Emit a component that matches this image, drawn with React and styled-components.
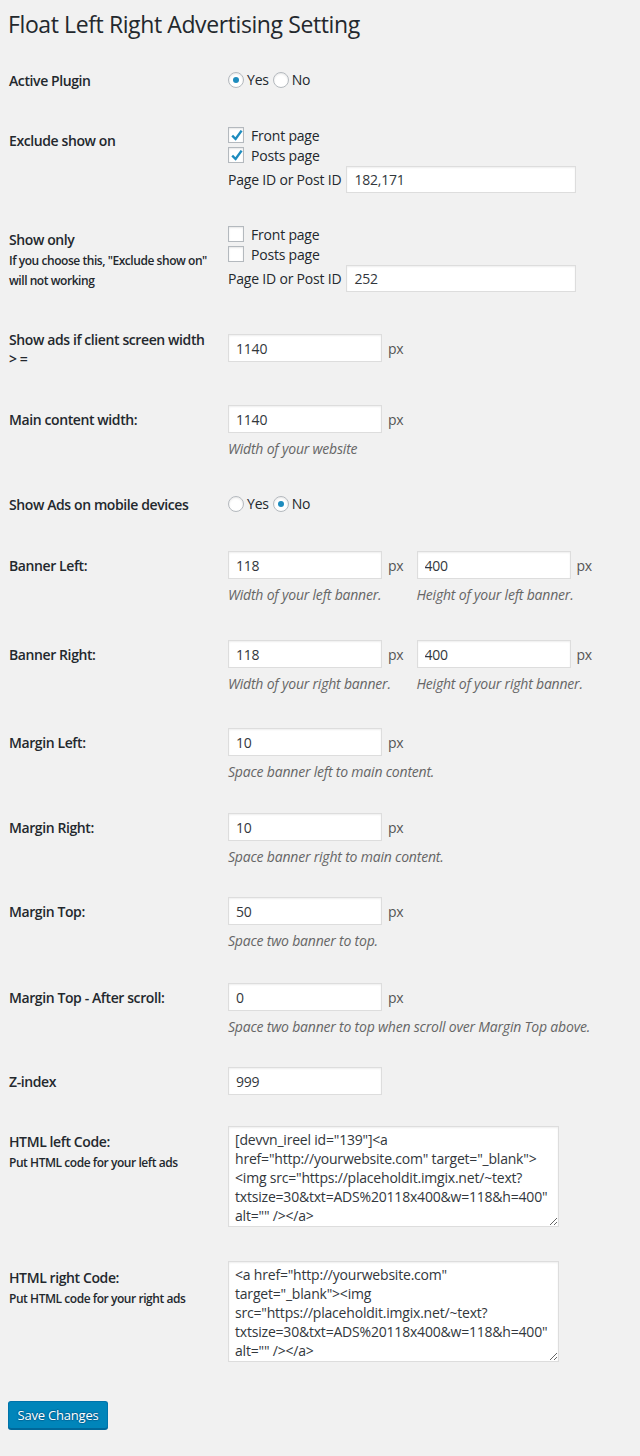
import React from 'react';
import styled, { createGlobalStyle } from 'styled-components';

const GlobalStyle = createGlobalStyle`
  html, body {
    margin: 0;
    background: #f1f1f1;
  }
  body {
    font-family: "Open Sans", "Noto Sans", sans-serif;
    font-size: 14px;
    letter-spacing: -0.2px;
    color: #23282d;
  }
`;

const Wrap = styled.div`
  padding: 0 8px 27px;
`;

const Title = styled.h1`
  margin: 0 0 12px;
  padding-top: 9px;
  font-size: 23px;
  font-weight: 400;
  line-height: 30px;
  letter-spacing: -0.4px;
  color: #23282d;
`;

const Row = styled.div`
  display: grid;
  grid-template-columns: 220px 1fr;
  min-height: ${(p) => p.$h || 60}px;
`;

const Th = styled.div`
  padding: 20px 10px 0 1px;
  font-weight: 600;
  line-height: 19px;
  letter-spacing: -0.4px;
`;

const SubNote = styled.span`
  display: block;
  margin-top: 2px;
  font-size: 12px;
  line-height: 20px;
  letter-spacing: -0.45px;
  white-space: nowrap;
`;

const Td = styled.div`
  padding-top: ${(p) => p.$pt ?? 14}px;
`;

const Line = styled.div`
  display: flex;
  align-items: center;
  gap: ${(p) => p.$gap ?? 0}px;
  height: ${(p) => p.$h || 30}px;
`;

const Choice = styled.label`
  display: inline-flex;
  align-items: center;
  margin-right: 4px;
  line-height: 18px;
`;

const RadioDot = styled.span`
  width: 16px;
  height: 16px;
  box-sizing: border-box;
  border: 1px solid #b4b9be;
  border-radius: 50%;
  background: #fff;
  box-shadow: inset 0 1px 2px rgba(0, 0, 0, 0.1);
  margin-right: 3px;
  display: flex;
  align-items: center;
  justify-content: center;

  &::after {
    content: '';
    width: 6px;
    height: 6px;
    border-radius: 50%;
    background: #1e8cbe;
    display: ${(p) => (p.$on ? 'block' : 'none')};
  }
`;

const Box = styled.span`
  width: 16px;
  height: 16px;
  box-sizing: border-box;
  border: 1px solid #b4b9be;
  background: #fff;
  box-shadow: inset 0 1px 2px rgba(0, 0, 0, 0.1);
  margin-right: 7px;
  position: relative;

  svg {
    position: absolute;
    left: -1px;
    top: -1px;
  }
`;

const CheckLine = styled.label`
  display: flex;
  align-items: center;
  height: 20px;
`;

const Input = styled.input`
  box-sizing: border-box;
  width: ${(p) => p.$w || 154}px;
  height: ${(p) => p.$h || 28}px;
  margin: 0;
  padding: 0 7px;
  border: 1px solid #ddd;
  box-shadow: inset 0 1px 2px rgba(0, 0, 0, 0.07);
  background: #fff;
  color: #32373c;
  font: inherit;
  font-size: 14px;
  letter-spacing: -0.2px;
  outline: none;
`;

const Unit = styled.span`
  color: #555;
  margin-left: 6px;
`;

const Pair = styled.div`
  display: flex;
  gap: 13px;
`;

const Field = styled.div`
  display: flex;
  flex-direction: column;
`;

const Desc = styled.p`
  margin: 6px 0 0;
  font-style: italic;
  color: #666;
  line-height: 18px;
  white-space: nowrap;
`;

const Code = styled.textarea`
  box-sizing: border-box;
  width: 331px;
  height: 101px;
  margin: 0;
  padding: 3px 6px;
  border: 1px solid #ddd;
  box-shadow: inset 0 1px 2px rgba(0, 0, 0, 0.07);
  background: #fff;
  color: #32373c;
  font: inherit;
  font-size: 14px;
  line-height: 19px;
  letter-spacing: -0.2px;
  overflow: hidden;
  outline: none;
`;

const Submit = styled.div`
  padding-top: 26px;
`;

const Button = styled.button`
  width: 100px;
  height: 28px;
  padding: 0 0 1px;
  border: 1px solid #0073aa;
  border-bottom-color: #006799;
  border-radius: 3px;
  background: #0085ba;
  box-shadow: 0 1px 0 #006799;
  color: #fff;
  font: inherit;
  font-size: 13px;
  letter-spacing: -0.2px;
  text-shadow: 0 -1px 1px #006799, 1px 0 1px #006799, 0 1px 1px #006799, -1px 0 1px #006799;
  cursor: pointer;
`;

const Radio = ({ on, children }) => (
  <Choice>
    <RadioDot $on={on} />
    {children}
  </Choice>
);

const Check = ({ on, children }) => (
  <CheckLine>
    <Box>
      {on && (
        <svg width="16" height="16" viewBox="0 0 16 16">
          <path d="M4.2 8.6 L7.6 12 L13.6 3.6" fill="none" stroke="#1e8cbe" strokeWidth="2.4" />
        </svg>
      )}
    </Box>
    {children}
  </CheckLine>
);

const PxInput = ({ value, desc }) => (
  <Field>
    <Line>
      <Input defaultValue={value} />
      <Unit>px</Unit>
    </Line>
    {desc && <Desc>{desc}</Desc>}
  </Field>
);

const leftCode = `[devvn_ireel id="139"]<a
href="http://yourwebsite.com" target="_blank">
<img src="https://placeholdit.imgix.net/~text?
txtsize=30&txt=ADS%20118x400&w=118&h=400"
alt="" /></a>`;

const rightCode = `<a href="http://yourwebsite.com"
target="_blank"><img
src="https://placeholdit.imgix.net/~text?
txtsize=30&txt=ADS%20118x400&w=118&h=400"
alt="" /></a>`;

export default function App() {
  return (
    <>
      <GlobalStyle />
      <Wrap>
        <Title>Float Left Right Advertising Setting</Title>

        <Row $h={60}>
          <Th>Active Plugin</Th>
          <Td>
            <Line>
              <Radio on>Yes</Radio>
              <Radio>No</Radio>
            </Line>
          </Td>
        </Row>

        <Row $h={99}>
          <Th>Exclude show on</Th>
          <Td>
            <Check on>Front page</Check>
            <Check on>Posts page</Check>
            <Line $gap={5} $h={29}>
              Page ID or Post ID
              <Input $w={230} $h={27} defaultValue="182,171" />
            </Line>
          </Td>
        </Row>

        <Row $h={100}>
          <Th>
            Show only
            <SubNote>
              If you choose this, "Exclude show on"
              <br />
              will not working
            </SubNote>
          </Th>
          <Td>
            <Check>Front page</Check>
            <Check>Posts page</Check>
            <Line $gap={5} $h={29}>
              Page ID or Post ID
              <Input $w={230} $h={27} defaultValue="252" />
            </Line>
          </Td>
        </Row>

        <Row $h={80}>
          <Th>
            Show ads if client screen width
            <br />
            &gt; =
          </Th>
          <Td $pt={23}>
            <PxInput value="1140" />
          </Td>
        </Row>

        <Row $h={85}>
          <Th>Main content width:</Th>
          <Td>
            <PxInput value="1140" desc="Width of your website" />
          </Td>
        </Row>

        <Row $h={61}>
          <Th>Show Ads on mobile devices</Th>
          <Td>
            <Line>
              <Radio>Yes</Radio>
              <Radio on>No</Radio>
            </Line>
          </Td>
        </Row>

        <Row $h={89}>
          <Th>Banner Left:</Th>
          <Td>
            <Pair>
              <PxInput value="118" desc="Width of your left banner." />
              <PxInput value="400" desc="Height of your left banner." />
            </Pair>
          </Td>
        </Row>

        <Row $h={88}>
          <Th>Banner Right:</Th>
          <Td>
            <Pair>
              <PxInput value="118" desc="Width of your right banner." />
              <PxInput value="400" desc="Height of your right banner." />
            </Pair>
          </Td>
        </Row>

        <Row $h={85}>
          <Th>Margin Left:</Th>
          <Td>
            <PxInput value="10" desc="Space banner left to main content." />
          </Td>
        </Row>

        <Row $h={84}>
          <Th>Margin Right:</Th>
          <Td>
            <PxInput value="10" desc="Space banner right to main content." />
          </Td>
        </Row>

        <Row $h={86}>
          <Th>Margin Top:</Th>
          <Td>
            <PxInput value="50" desc="Space two banner to top." />
          </Td>
        </Row>

        <Row $h={84}>
          <Th>Margin Top - After scroll:</Th>
          <Td>
            <PxInput value="0" desc="Space two banner to top when scroll over Margin Top above." />
          </Td>
        </Row>

        <Row $h={60}>
          <Th>Z-index</Th>
          <Td>
            <Line>
              <Input defaultValue="999" />
            </Line>
          </Td>
        </Row>

        <Row $h={136}>
          <Th>
            HTML left Code:
            <SubNote>Put HTML code for your left ads</SubNote>
          </Th>
          <Td>
            <Code wrap="off" defaultValue={leftCode} />
          </Td>
        </Row>

        <Row $h={127}>
          <Th>
            HTML right Code:
            <SubNote>Put HTML code for your right ads</SubNote>
          </Th>
          <Td $pt={13}>
            <Code wrap="off" defaultValue={rightCode} />
          </Td>
        </Row>

        <Submit>
          <Button type="button">Save Changes</Button>
        </Submit>
      </Wrap>
    </>
  );
}
